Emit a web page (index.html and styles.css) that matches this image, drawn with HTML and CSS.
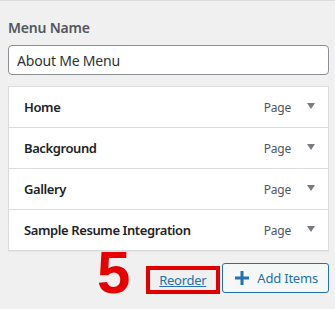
FILE: index.html
```html
<!DOCTYPE html>
<html lang="en">
<head>
    <meta charset="UTF-8">
    <meta name="viewport" content="width=device-width, initial-scale=1.0">
    <title>Menu Structure</title>
    <link rel="stylesheet" href="styles.css">
</head>
<body>
    <div class="menu-panel">
        <label class="menu-label" for="menu-name">Menu Name</label>
        <input class="menu-name" id="menu-name" type="text" value="About Me Menu">

        <ul class="menu-items">
            <li class="menu-item">
                <span class="item-title">Home</span>
                <span class="item-type">Page</span>
                <span class="item-toggle"></span>
            </li>
            <li class="menu-item">
                <span class="item-title">Background</span>
                <span class="item-type">Page</span>
                <span class="item-toggle"></span>
            </li>
            <li class="menu-item">
                <span class="item-title">Gallery</span>
                <span class="item-type">Page</span>
                <span class="item-toggle"></span>
            </li>
            <li class="menu-item">
                <span class="item-title">Sample Resume Integration</span>
                <span class="item-type">Page</span>
                <span class="item-toggle"></span>
            </li>
        </ul>

        <div class="menu-actions">
            <span class="step-number">5</span>
            <div class="reorder-box">
                <a href="#" class="reorder-link">Reorder</a>
            </div>
            <button class="add-items" type="button">
                <svg class="plus-icon" width="14" height="14" viewBox="0 0 14 14">
                    <rect x="5.5" y="0" width="3" height="14" fill="#2271b1"/>
                    <rect x="0" y="5.5" width="14" height="3" fill="#2271b1"/>
                </svg>
                Add Items
            </button>
        </div>
    </div>
</body>
</html>
```

FILE: styles.css
```css
body {
    font-family: 'Noto Sans', 'Open Sans', sans-serif;
    margin: 0;
    padding: 0;
    background-color: #f0f0f0;
    border-top: 1px solid #dcdcde;
    color: #1d2327;
    height: 308px;
    overflow: hidden;
}

.menu-panel {
    padding: 17px 6px 0 8px;
    display: flex;
    flex-direction: column;
}

.menu-label {
    font-size: 14px;
    font-weight: 600;
    line-height: 20px;
    color: #50575e;
    letter-spacing: -0.2px;
}

.menu-name {
    margin: 7px 0 0;
    height: 30px;
    box-sizing: border-box;
    border: 1px solid #8c8f94;
    border-radius: 4px;
    padding: 0 8px;
    font-family: inherit;
    font-size: 14px;
    letter-spacing: -0.2px;
    color: #2c3338;
    background-color: #fff;
    outline: none;
}

.menu-items {
    list-style: none;
    margin: 11px 0 0;
    padding: 0;
    background-color: #fff;
    border: 1px solid #dcdcde;
    box-shadow: 0 1px 1px rgba(0, 0, 0, 0.04);
}

.menu-item {
    display: flex;
    align-items: center;
    height: 40px;
    padding: 0 13px 0 15px;
    border-top: 1px solid #dcdcde;
}

.menu-item:first-child {
    border-top: none;
}

.item-title {
    flex: 1;
    font-size: 13px;
    font-weight: 600;
    letter-spacing: -0.4px;
    color: #1d2327;
}

.item-type {
    font-size: 12px;
    letter-spacing: -0.2px;
    color: #50575e;
    margin-right: 16px;
}

.item-toggle {
    width: 0;
    height: 0;
    border-left: 4px solid transparent;
    border-right: 4px solid transparent;
    border-top: 6px solid #787c82;
    margin-top: -3px;
}

.menu-actions {
    display: flex;
    justify-content: flex-end;
    align-items: flex-start;
    margin-top: 12px;
}

.step-number {
    font-family: 'Liberation Sans', Arial, sans-serif;
    font-size: 60px;
    font-weight: 700;
    line-height: 60px;
    height: 60px;
    color: #e60000;
    margin: -20px 16px 0 0;
}

.reorder-box {
    border: 4px solid #e00000;
    padding: 0 10px 0 9px;
    height: 28px;
    box-sizing: border-box;
    display: flex;
    align-items: center;
    margin: 3px 2px 0 0;
}

.reorder-link {
    font-size: 13px;
    letter-spacing: -0.3px;
    color: #2271b1;
    text-decoration: underline;
}

.add-items {
    display: flex;
    align-items: center;
    gap: 8px;
    height: 30px;
    box-sizing: border-box;
    padding: 0 10px 0 12px;
    border: 1px solid #2271b1;
    border-radius: 3px;
    background-color: #f6f7f7;
    color: #2271b1;
    font-family: inherit;
    font-size: 13px;
    letter-spacing: -0.2px;
}
```
